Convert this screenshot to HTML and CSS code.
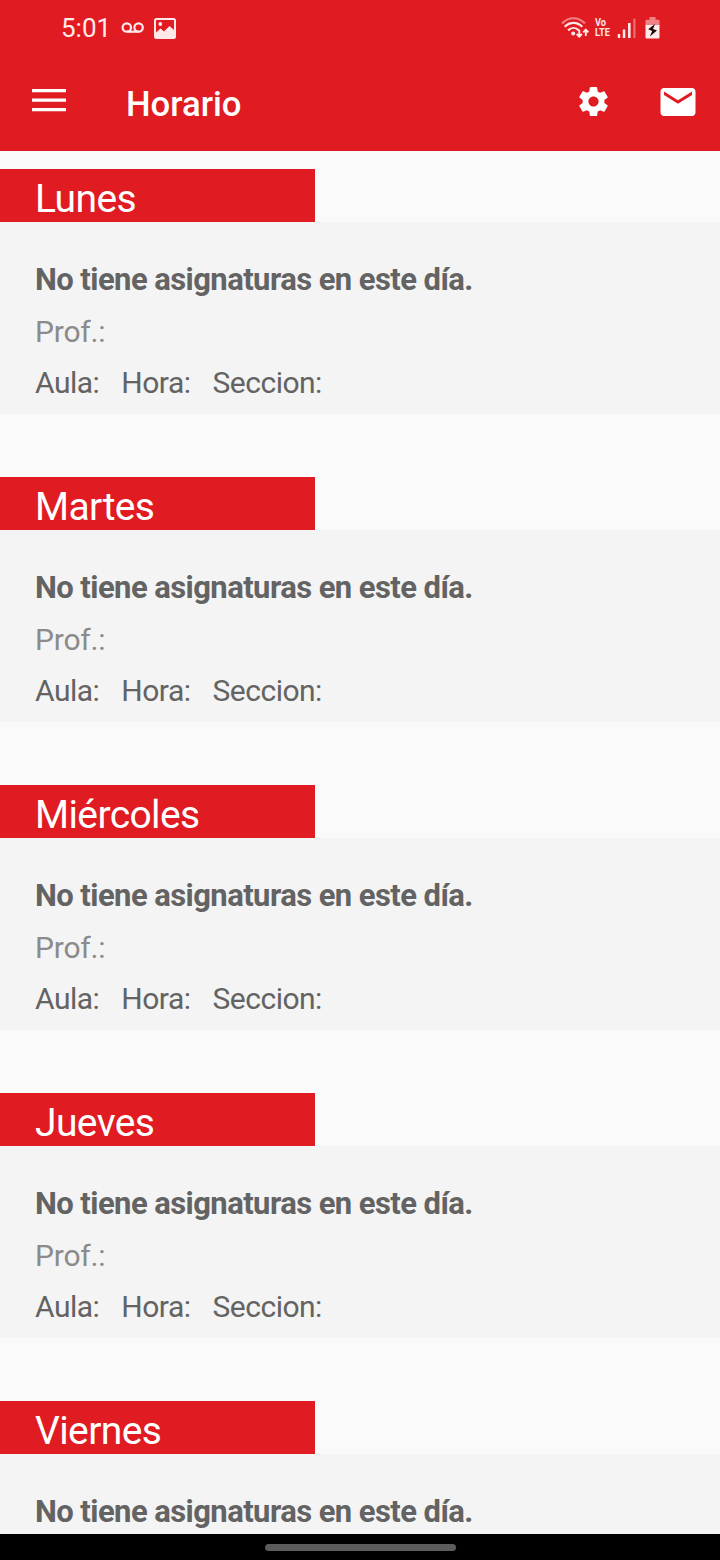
FILE: index.html
```
<!DOCTYPE html>
<html lang="es">
<head>
<meta charset="UTF-8">
<meta name="viewport" content="width=device-width, initial-scale=1.0">
<title>Horario</title>
<link rel="stylesheet" href="styles.css">
</head>
<body>

<div class="screen">
    <header class="header">
        <div class="status-bar">
            <span class="clock">5:01</span>
            <svg class="voicemail" width="24" height="14" viewBox="0 0 24 14">
                <g fill="none" stroke="#ffe9e9" stroke-width="2.2">
                    <circle cx="5.8" cy="6.5" r="4.2"/>
                    <circle cx="17.6" cy="6.5" r="4.2"/>
                    <path d="M5.8 10.7h11.8"/>
                </g>
            </svg>
            <svg class="picture" width="22" height="21" viewBox="0 0 22 21">
                <rect x="1" y="1" width="20" height="19" rx="1.5" fill="none" stroke="#ffe9e9" stroke-width="2"/>
                <path d="M2 14.500l4.500-4 3.500 3 5.500-5.500L20 12v8H2z" fill="#ffe9e9"/>
                <circle cx="6.300" cy="6" r="1.900" fill="#ffe9e9"/>
            </svg>
            <div class="status-right">
                <svg class="wifi" width="30" height="24" viewBox="0 0 30 24">
                    <g fill="none" stroke="#ffe9e9" stroke-width="2.2">
                        <path d="M1 7.500C7.500.500 17.500.500 24 7.500" opacity=".5"/>
                        <path d="M3.700 10.800c5-5.200 12.600-5.200 17.600 0"/>
                        <path d="M7.100 14.400c3.200-3.200 7.600-3.200 10.800 0"/>
                    </g>
                    <circle cx="12.200" cy="17.500" r="2" fill="#ffe9e9"/>
                    <path d="M18.300 14v6.500M15.700 18l2.600 2.600 2.600-2.600M24.800 20v-6M22.200 16.300l2.600-2.600 2.600 2.600" fill="none" stroke="#ffe9e9" stroke-width="1.900"/>
                </svg>
                <span class="volte"><span>Vo</span><span>LTE</span></span>
                <svg class="signal" width="20" height="22" viewBox="0 0 20 22">
                    <path d="M.800 17h2.400v4H.800zM5.800 12.500h2.500V21H5.800zM11 6h2.600v15H11z" fill="#ffe9e9"/>
                    <path d="M16.300 1.500h2.200V21h-2.200z" fill="#ffe9e9" opacity=".4"/>
                </svg>
                <svg class="battery" width="15" height="22" viewBox="0 0 15 22">
                    <path d="M4.500 0h6v2.700h3q1 0 1 1V9H.500V3.700q0-1 1-1h3z" fill="#ffe9e9" opacity=".5"/>
                    <path d="M.500 8h14v12.500q0 1-1 1h-12q-1 0-1-1z" fill="#ffe9e9"/>
                    <path d="M10 7L3.200 12.300l4 1.600L4.800 19.500l7.200-6-4-1.500z" fill="#1d0808"/>
                </svg>
            </div>
        </div>
        <div class="toolbar">
            <svg class="menu-icon" width="34" height="23" viewBox="0 0 34 23" fill="#fff">
                <path d="M0 0h34v3.300H0zM0 9.500h34v3.300H0zM0 19h34v3.300H0z"/>
            </svg>
            <h1 class="title">Horario</h1>
            <svg class="settings-icon" width="35" height="35" viewBox="0 0 24 24" fill="#fff">
                <path d="M19.430 12.980c.04-.32.070-.640.070-.980s-.030-.660-.070-.980l2.110-1.650c.190-.150.240-.420.120-.640l-2-3.460c-.120-.220-.390-.300-.610-.220l-2.490 1c-.520-.400-1.080-.730-1.690-.980l-.380-2.650C14.460 2.180 14.250 2 14 2h-4c-.250 0-.460.180-.490.420l-.380 2.650c-.610.250-1.170.590-1.690.980l-2.490-1c-.230-.090-.490 0-.610.220l-2 3.460c-.130.220-.070.490.120.640l2.110 1.650c-.040.320-.070.650-.070.980s.030.660.070.980l-2.110 1.650c-.190.150-.240.420-.120.640l2 3.460c.120.220.390.300.610.220l2.490-1c.520.400 1.080.730 1.690.980l.380 2.650c.030.240.240.420.490.420h4c.250 0 .460-.180.490-.420l.380-2.650c.610-.250 1.170-.590 1.690-.980l2.490 1c.230.090.490 0 .610-.220l2-3.460c.120-.220.070-.490-.120-.640l-2.110-1.650zM12 15.500c-1.930 0-3.500-1.570-3.500-3.500s1.570-3.500 3.500-3.500 3.500 1.570 3.500 3.500-1.570 3.500-3.500 3.500z"/>
            </svg>
            <svg class="mail-icon" width="42" height="42" viewBox="0 0 24 24" fill="#fff">
                <path d="M20 4H4c-1.100 0-1.990.900-1.990 2L2 18c0 1.100.900 2 2 2h16c1.100 0 2-.900 2-2V6c0-1.100-.900-2-2-2zm0 4l-8 5-8-5V6l8 5 8-5v2z"/>
            </svg>
        </div>
    </header>

    <main class="schedule">
        <section class="day">
            <h2 class="day-name">Lunes</h2>
            <div class="card">
                <p class="subject">No tiene asignaturas en este día.</p>
                <p class="teacher">Prof.:</p>
                <p class="details"><span>Aula:</span><span>Hora:</span><span>Seccion:</span></p>
            </div>
        </section>
        <section class="day">
            <h2 class="day-name">Martes</h2>
            <div class="card">
                <p class="subject">No tiene asignaturas en este día.</p>
                <p class="teacher">Prof.:</p>
                <p class="details"><span>Aula:</span><span>Hora:</span><span>Seccion:</span></p>
            </div>
        </section>
        <section class="day">
            <h2 class="day-name">Miércoles</h2>
            <div class="card">
                <p class="subject">No tiene asignaturas en este día.</p>
                <p class="teacher">Prof.:</p>
                <p class="details"><span>Aula:</span><span>Hora:</span><span>Seccion:</span></p>
            </div>
        </section>
        <section class="day">
            <h2 class="day-name">Jueves</h2>
            <div class="card">
                <p class="subject">No tiene asignaturas en este día.</p>
                <p class="teacher">Prof.:</p>
                <p class="details"><span>Aula:</span><span>Hora:</span><span>Seccion:</span></p>
            </div>
        </section>
        <section class="day">
            <h2 class="day-name">Viernes</h2>
            <div class="card">
                <p class="subject">No tiene asignaturas en este día.</p>
            </div>
        </section>
    </main>

    <div class="nav-bar">
        <div class="nav-handle"></div>
    </div>
</div>

</body>
</html>
```
FILE: styles.css
```
* {
    box-sizing: border-box;
}

body {
    margin: 0;
    font-family: Roboto, sans-serif;
    background-color: #fafafa;
}

h1, h2, p {
    margin: 0;
}

svg {
    display: block;
    flex-shrink: 0;
}

.screen {
    display: flex;
    flex-direction: column;
    width: 720px;
    height: 1560px;
    overflow: hidden;
}

/* header */
.header {
    flex-shrink: 0;
    height: 151px;
    background-color: #e01b22;
    color: #fff;
}

.status-bar {
    display: flex;
    align-items: center;
    height: 56px;
    padding: 0 60px 0 61px;
    color: #ffe9e9;
}

.clock {
    width: 60px;
    font-size: 26px;
    line-height: 56px;
}

.picture {
    margin-left: 9px;
}

.status-right {
    display: flex;
    align-items: center;
    margin-left: auto;
}

.volte {
    display: flex;
    flex-direction: column;
    width: 18px;
    margin-left: 4px;
    font-size: 10.5px;
    font-weight: 700;
    line-height: 10px;
    transform: scaleX(0.88);
    transform-origin: left;
}

.signal {
    margin-left: 4px;
}

.battery {
    margin-left: 8px;
}

.toolbar {
    display: flex;
    align-items: center;
    height: 91px;
    padding: 0 21px 0 32px;
}

.menu-icon {
    margin-top: -2px;
}

.title {
    margin: 5px auto 0 60px;
    font-size: 34.7px;
    font-weight: 500;
    line-height: 40px;
}

.mail-icon {
    margin-left: 46px;
}

/* day list */
.schedule {
    flex: 1;
    min-height: 0;
    padding-top: 18px;
    overflow: hidden;
}

.day {
    margin-bottom: 63px;
}

.day-name {
    width: 315px;
    height: 53px;
    padding: 7px 0 0 35px;
    background-color: #e01b22;
    color: #fff;
    font-size: 39px;
    font-weight: 400;
    line-height: 46px;
    letter-spacing: -0.6px;
}

.card {
    height: 192px;
    padding: 32px 35px 0;
    background-color: #f4f4f4;
    color: #636363;
    font-size: 30px;
    line-height: 52px;
    letter-spacing: -0.5px;
}

.subject {
    font-size: 31px;
    font-weight: 700;
    letter-spacing: -0.57px;
}

.teacher {
    color: #8b8b8b;
    letter-spacing: -0.2px;
}

.details {
    display: flex;
    gap: 22px;
    line-height: 50px;
}

/* system navigation */
.nav-bar {
    display: flex;
    flex-shrink: 0;
    justify-content: center;
    height: 26px;
    padding-top: 10px;
    background-color: #000;
}

.nav-handle {
    width: 191px;
    height: 7px;
    border-radius: 4px;
    background-color: #5c5c5c;
}
```
